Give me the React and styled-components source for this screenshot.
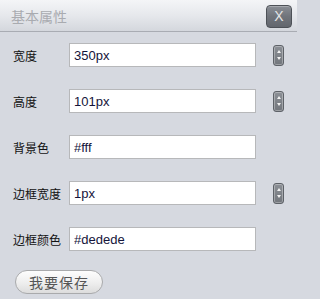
import React, { useState } from 'react';
import styled, { createGlobalStyle } from 'styled-components';

const GlobalStyle = createGlobalStyle`
  html, body {
    margin: 0;
    padding: 0;
    background: #d6d9e0;
  }
  body {
    font-family: "Liberation Sans", "Noto Sans CJK SC", sans-serif;
  }
`;

const Panel = styled.div`
  width: 297px;
  height: 299px;
  background: #d6d9e0;
  display: flex;
  flex-direction: column;
  overflow: hidden;
`;

const Header = styled.div`
  height: 31px;
  flex: none;
  display: flex;
  align-items: center;
  justify-content: space-between;
  padding: 0 5px 0 11px;
  background: linear-gradient(to bottom, #f4f5f7 0%, #e6e8ec 50%, #d4d7dd 100%);
  border-bottom: 1px solid #a9acb3;
`;

const Title = styled.span`
  font-family: "Noto Sans CJK SC", sans-serif;
  font-size: 14px;
  color: #a9abb0;
  letter-spacing: 0;
`;

const CloseButton = styled.button`
  width: 26px;
  height: 23px;
  margin-top: 1px;
  padding: 0;
  border: 1px solid #4d5157;
  border-radius: 4px;
  background: linear-gradient(to bottom, #8a8e95 0%, #70747b 50%, #62666d 100%);
  box-shadow: inset 0 1px 0 rgba(255, 255, 255, 0.25);
  color: #e4e5e7;
  font-family: "Liberation Sans", sans-serif;
  font-size: 14px;
  line-height: 21px;
  cursor: pointer;
`;

const Body = styled.div`
  display: flex;
  flex-direction: column;
  padding: 11px 0 0 13px;
  gap: 22px;
`;

const Row = styled.div`
  display: flex;
  align-items: center;
  height: 24px;
`;

const Label = styled.label`
  width: 56px;
  flex: none;
  font-family: "Noto Sans CJK SC", sans-serif;
  font-size: 12px;
  color: #111;
`;

const Input = styled.input`
  box-sizing: border-box;
  width: 187px;
  height: 24px;
  margin: 0;
  padding: 0 4px;
  border: 1px solid #b7b8ba;
  background: #fff;
  font-family: "Liberation Sans", sans-serif;
  font-size: 13px;
  color: #14143a;
  outline: none;
`;

const Spinner = styled.div`
  box-sizing: border-box;
  width: 11px;
  height: 21px;
  margin-left: 17px;
  border: 1px solid #5e6268;
  border-radius: 3px;
  background: linear-gradient(to bottom, #8c9096 0%, #72767c 100%);
  box-shadow: inset 0 0 0 1px rgba(255, 255, 255, 0.3);
  display: flex;
  flex-direction: column;
  align-items: center;
  justify-content: space-around;
  padding: 3px 0;
`;

const Arrow = styled.span`
  width: 0;
  height: 0;
  border-left: 2.5px solid transparent;
  border-right: 2.5px solid transparent;
  ${({ $down }) =>
    $down ? 'border-top: 3px solid #f2f2f2;' : 'border-bottom: 3px solid #f2f2f2;'}
`;

const SaveButton = styled.button`
  align-self: flex-start;
  width: 88px;
  height: 24px;
  margin: -3px 0 0 2px;
  padding: 0;
  border: 1px solid #a9aaac;
  border-radius: 12px;
  background: linear-gradient(to bottom, #fdfdfd 0%, #eeeeee 55%, #dcdcdc 100%);
  color: #555;
  font-family: "Noto Sans CJK SC", sans-serif;
  font-size: 14px;
  letter-spacing: 1px;
  cursor: pointer;
`;

const fields = [
  { key: 'width', label: '宽度', value: '350px', spin: true },
  { key: 'height', label: '高度', value: '101px', spin: true },
  { key: 'bg', label: '背景色', value: '#fff' },
  { key: 'borderWidth', label: '边框宽度', value: '1px', spin: true },
  { key: 'borderColor', label: '边框颜色', value: '#dedede' },
];

const App = () => {
  const [values, setValues] = useState(
    Object.fromEntries(fields.map((f) => [f.key, f.value]))
  );

  return (
    <>
      <GlobalStyle />
      <Panel>
        <Header>
          <Title>基本属性</Title>
          <CloseButton>X</CloseButton>
        </Header>
        <Body>
          {fields.map((f) => (
            <Row key={f.key}>
              <Label>{f.label}</Label>
              <Input
                value={values[f.key]}
                onChange={(e) => setValues({ ...values, [f.key]: e.target.value })}
              />
              {f.spin && (
                <Spinner>
                  <Arrow />
                  <Arrow $down />
                </Spinner>
              )}
            </Row>
          ))}
          <SaveButton>我要保存</SaveButton>
        </Body>
      </Panel>
    </>
  );
};

export default App;
